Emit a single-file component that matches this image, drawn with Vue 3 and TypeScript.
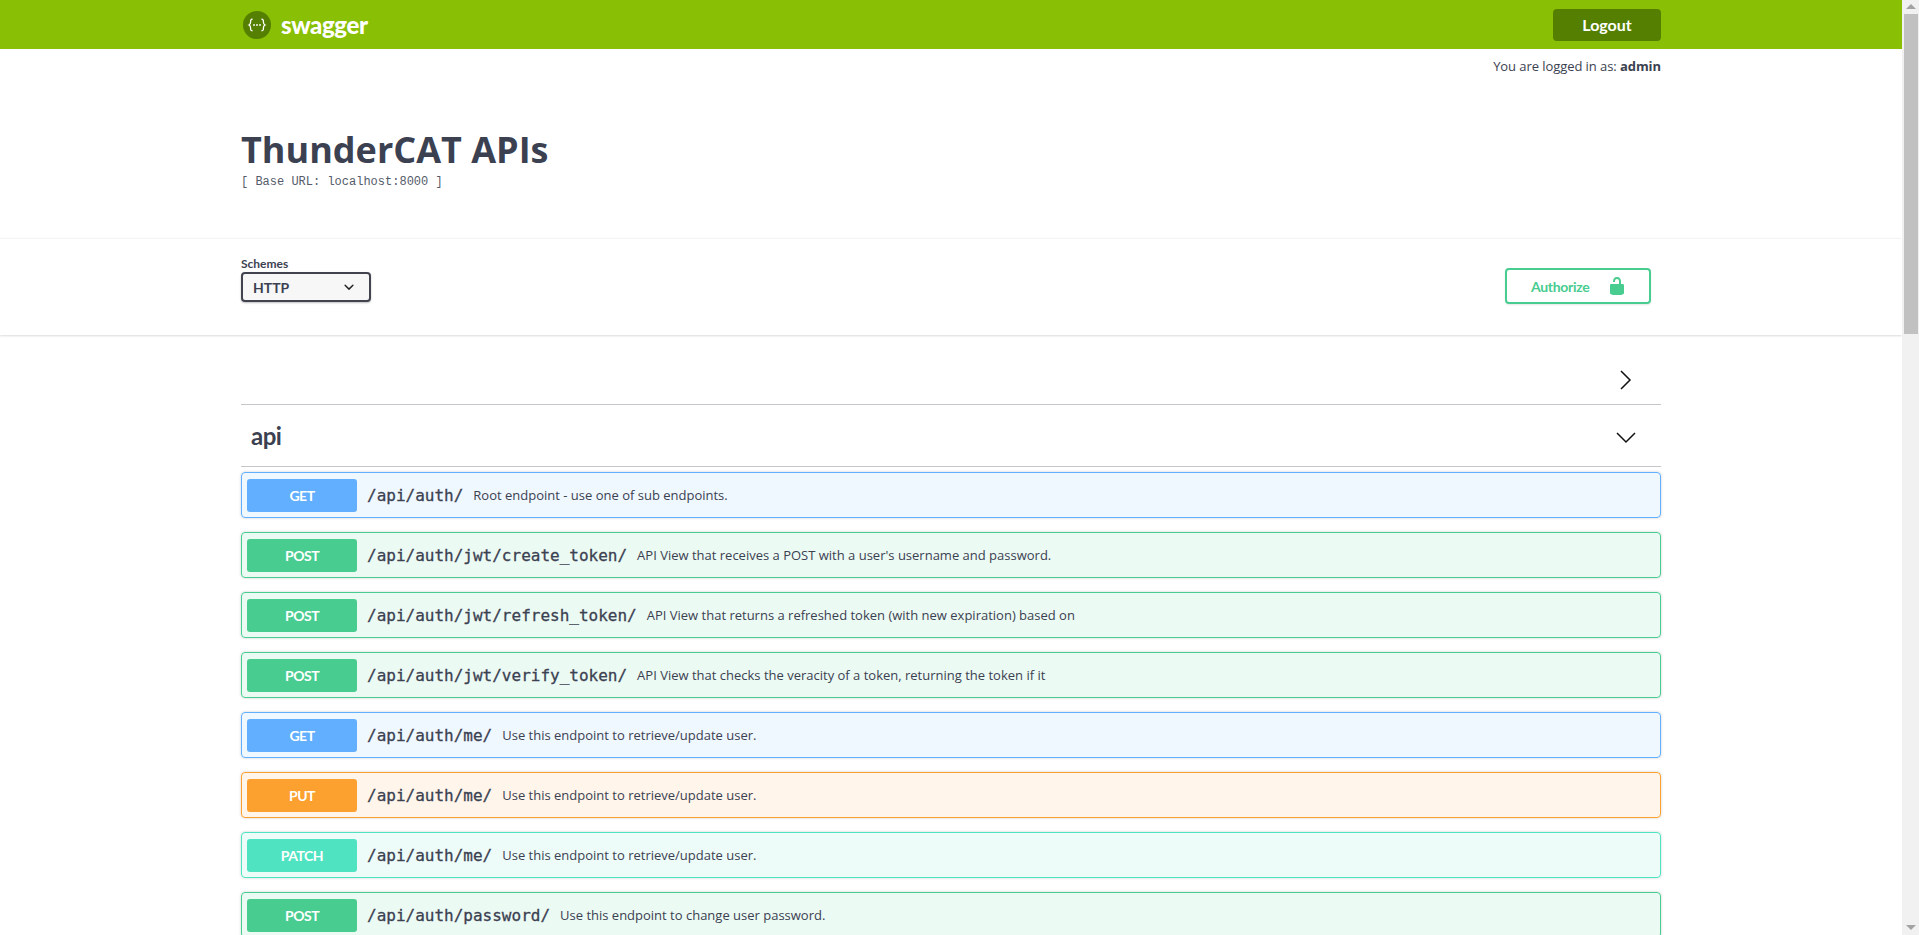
<template>
  <div class="shell">
    <main class="page">
      <header class="topbar">
        <div class="wrap topbar-inner">
          <a class="logo">
            <svg class="logo-mark" viewBox="0 0 28 28" width="28" height="28">
              <circle cx="14" cy="14" r="14" fill="#547f00" />
              <path d="M9.6 8.2c-2.2 0-2 1.4-2 2.8 0 1.500-.5 2.500-1.600 3 1.100.5 1.600 1.500 1.600 3 0 1.400-.2 2.800 2 2.800M18.400 8.200c2.200 0 2 1.400 2 2.800 0 1.500.5 2.500 1.600 3-1.100.5-1.600 1.500-1.600 3 0 1.400.2 2.800-2 2.800" fill="none" stroke="#fff" stroke-width="1.300" />
              <circle cx="11" cy="14" r="0.900" fill="#fff" />
              <circle cx="14" cy="14" r="0.900" fill="#fff" />
              <circle cx="17" cy="14" r="0.900" fill="#fff" />
            </svg>
            <span class="logo-text">swagger</span>
          </a>
          <button class="logout">Logout</button>
        </div>
      </header>

      <div class="wrap">
        <p class="logged">You are logged in as: <strong>admin</strong></p>
        <div class="info">
          <h2 class="title">ThunderCAT APIs</h2>
          <pre class="base-url">[ Base URL: localhost:8000 ]</pre>
        </div>
      </div>

      <section class="schemes">
        <div class="wrap schemes-inner">
          <label class="schemes-field">
            <span class="schemes-label">Schemes</span>
            <span class="select">
              HTTP
              <svg viewBox="0 0 20 20" width="20" height="20">
                <path d="M13.418 7.859a.695.695 0 0 1 .978 0 .68.68 0 0 1 0 .969l-3.908 3.830a.697.697 0 0 1-.979 0l-3.908-3.830a.680.680 0 0 1 0-.969.695.695 0 0 1 .978 0L10 11l3.418-3.141z" />
              </svg>
            </span>
          </label>
          <button class="authorize">
            <span>Authorize</span>
            <svg viewBox="0 0 20 20" width="20" height="20">
              <path d="M15.800 8H14V5.600C14 2.703 12.665 1 10 1 7.334 1 6 2.703 6 5.600V6h2v-.801C8 3.754 8.797 3 10 3c1.203 0 2 .754 2 2.199V8H4c-.553 0-1 .646-1 1.199V17c0 .549.428 1.139.951 1.307l1.197.387C5.672 18.861 6.450 19 7 19h6c.549 0 1.327-.139 1.850-.307l1.198-.387c.522-.167.951-.757.951-1.306V9.199C17 8.646 16.352 8 15.800 8z" />
            </svg>
          </button>
        </div>
      </section>

      <div class="wrap">
        <div class="tag tag-empty">
          <svg class="chevron" viewBox="0 0 20 20" width="20" height="20">
            <path d="M5 1l9 9-9 9" />
          </svg>
        </div>
        <div class="tag">
          <h4 class="tag-name">api</h4>
          <svg class="chevron" viewBox="0 0 20 20" width="20" height="20">
            <path d="M1 5l9 9 9-9" />
          </svg>
        </div>

        <div
          v-for="(op, index) in operations"
          :key="index"
          class="opblock"
          :class="op.method.toLowerCase()"
        >
          <span class="method">{{ op.method }}</span>
          <span class="path">{{ op.path }}</span>
          <span class="desc">{{ op.desc }}</span>
        </div>
      </div>
    </main>

    <!-- headless browser hides real scrollbars, so this one is drawn -->
    <aside class="scrollbar">
      <span class="arrow arrow-up"></span>
      <span class="thumb"></span>
      <span class="arrow arrow-down"></span>
    </aside>
  </div>
</template>

<script setup lang="ts">
interface Operation {
  method: 'GET' | 'POST' | 'PUT' | 'PATCH'
  path: string
  desc: string
}

const meDesc = 'Use this endpoint to retrieve/update user.'

const operations: Operation[] = [
  { method: 'GET', path: '/api/auth/', desc: 'Root endpoint - use one of sub endpoints.' },
  { method: 'POST', path: '/api/auth/jwt/create_token/', desc: "API View that receives a POST with a user's username and password." },
  { method: 'POST', path: '/api/auth/jwt/refresh_token/', desc: 'API View that returns a refreshed token (with new expiration) based on' },
  { method: 'POST', path: '/api/auth/jwt/verify_token/', desc: 'API View that checks the veracity of a token, returning the token if it' },
  { method: 'GET', path: '/api/auth/me/', desc: meDesc },
  { method: 'PUT', path: '/api/auth/me/', desc: meDesc },
  { method: 'PATCH', path: '/api/auth/me/', desc: meDesc },
  { method: 'POST', path: '/api/auth/password/', desc: 'Use this endpoint to change user password.' },
]
</script>

<style>
html,
body {
  height: 100%;
  overflow: hidden;
  background: #fff;
}
</style>

<style scoped>
.shell {
  display: flex;
  height: 100vh;
}
.page {
  flex: 1;
  min-width: 0;
  overflow: hidden;
  color: #3b4151;
  font-family: "Open Sans", sans-serif;
}
.wrap {
  max-width: 1420px;
  margin: 0 auto;
}

.scrollbar {
  display: flex;
  flex-direction: column;
  align-items: flex-end;
  flex: 0 0 17px;
  background: #f1f1f1;
}
.thumb {
  width: 14px;
  height: 320px;
  margin-right: 1px;
  background: #c1c1c1;
}
.arrow {
  align-self: center;
  width: 0;
  height: 0;
  border: 5px solid transparent;
  border-top: 0;
  border-bottom-color: #a3a3a3;
  margin: 4px 0 5px;
}
.arrow-down {
  margin-top: auto;
  transform: rotate(180deg);
}

.topbar {
  background: #89bf04;
  height: 49px;
}
.topbar-inner {
  display: flex;
  align-items: center;
  justify-content: space-between;
  height: 100%;
}
.logo {
  display: flex;
  align-items: center;
  gap: 10px;
  margin-left: 2px;
}
.logo-text {
  color: #fff;
  font: 900 24px Lato, sans-serif;
  letter-spacing: -0.4px;
}
.logout {
  width: 108px;
  height: 32px;
  border: 0;
  border-radius: 4px;
  background: #547f00;
  color: #fff;
  font: 700 16px Lato, sans-serif;
}

.logged {
  margin: 0;
  padding-top: 8px;
  font-size: 13px;
  line-height: 18px;
  letter-spacing: -0.07px;
  text-align: right;
}
.info {
  height: 163px;
  padding-top: 50px;
  box-sizing: border-box;
}
.title {
  margin: 0;
  font-size: 36px;
  font-weight: 700;
  line-height: 50px;
}
.base-url {
  margin: 0;
  color: #555b6a;
  font: 400 12px/14px "Liberation Mono", monospace;
}

.schemes {
  height: 97px;
  background: #fff;
  border-top: 1px solid #f4f4f4;
  box-sizing: border-box;
  box-shadow: 0 1px 2px rgba(0, 0, 0, 0.15);
}
.schemes-inner {
  display: flex;
  justify-content: space-between;
  align-items: flex-start;
  padding-top: 16px;
}
.schemes-field {
  display: flex;
  flex-direction: column;
}
.schemes-label {
  font: 700 12px/17px Lato, sans-serif;
}
.select {
  display: flex;
  align-items: center;
  justify-content: space-between;
  box-sizing: border-box;
  width: 130px;
  height: 30px;
  padding: 0 10px;
  border: 2px solid #41444e;
  border-radius: 4px;
  background: #f7f7f7;
  box-shadow: 0 1px 2px rgba(0, 0, 0, 0.25);
  font: 700 14px Lato, sans-serif;
}
.select svg {
  fill: #222;
}
.authorize {
  display: flex;
  align-items: center;
  justify-content: space-between;
  box-sizing: border-box;
  width: 146px;
  height: 36px;
  margin: 13px 10px 0 0;
  padding: 0 22px 0 24px;
  border: 2px solid #49cc90;
  border-radius: 4px;
  background: transparent;
  box-shadow: 0 1px 2px rgba(0, 0, 0, 0.1);
  color: #49cc90;
  font: 700 14px Lato, sans-serif;
  letter-spacing: -0.3px;
}
.authorize svg {
  fill: #49cc90;
}

.tag {
  display: flex;
  align-items: center;
  justify-content: space-between;
  box-sizing: border-box;
  height: 62px;
  padding: 0 20px 0 10px;
  border-bottom: 1px solid rgba(59, 65, 81, 0.3);
}
.tag-empty {
  justify-content: flex-end;
  height: 70px;
  padding-top: 17px;
}
.tag-name {
  margin: 0;
  font: 700 24px Lato, sans-serif;
  letter-spacing: -0.5px;
}
.chevron {
  fill: none;
  stroke: #111;
  stroke-width: 1.500;
  margin-right: 5px;
  transform: translateY(2px);
}

.opblock {
  display: flex;
  align-items: center;
  box-sizing: border-box;
  height: 46px;
  margin-bottom: 14px;
  padding: 5px;
  border: 1px solid;
  border-radius: 4px;
  box-shadow: 0 0 3px rgba(0, 0, 0, 0.19);
}
.tag + .opblock {
  margin-top: 5px;
}
.method {
  box-sizing: border-box;
  width: 110px;
  height: 33px;
  border-radius: 3px;
  color: #fff;
  font: 700 14px/33px Lato, sans-serif;
  letter-spacing: -0.5px;
  text-align: center;
}
.path {
  padding: 0 10px;
  font: 400 16px "DejaVu Sans Mono", monospace;
  -webkit-text-stroke: 0.3px;
}
.desc {
  font-size: 13px;
}
.get { background: rgba(97, 175, 254, 0.1); border-color: #61affe; }
.get .method { background: #61affe; }
.post { background: rgba(73, 204, 144, 0.1); border-color: #49cc90; }
.post .method { background: #49cc90; }
.put { background: rgba(252, 161, 48, 0.1); border-color: #fca130; }
.put .method { background: #fca130; }
.patch { background: rgba(80, 227, 194, 0.1); border-color: #50e3c2; }
.patch .method { background: #50e3c2; }
</style>
